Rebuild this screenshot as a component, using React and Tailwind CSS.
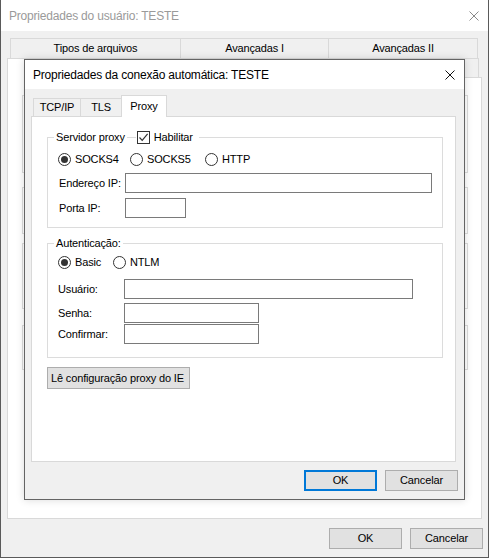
import React from "react";

const FONT = "font-['Liberation_Sans',Arial,sans-serif] text-[11px] tracking-[-0.15px]";

function CloseIcon({ color }) {
  return (
    <svg width="10" height="10" viewBox="0 0 10 10" className="block">
      <path d="M0.5 0.5L9.5 9.5M9.5 0.5L0.5 9.5" stroke={color} strokeWidth="1" fill="none" />
    </svg>
  );
}

function Radio({ checked, label, className = "" }) {
  return (
    <div className={`flex items-center h-[16px] ${className}`}>
      <span className="w-[13px] h-[13px] rounded-full border border-[#333] bg-white flex items-center justify-center shrink-0">
        {checked && <span className="w-[7px] h-[7px] rounded-full bg-[#333]" />}
      </span>
      <span className="ml-[4px] text-black">{label}</span>
    </div>
  );
}

function Checkbox({ checked }) {
  return (
    <span className="w-[13px] h-[13px] border border-[#333] bg-white flex items-center justify-center shrink-0">
      {checked && (
        <svg width="11" height="11" viewBox="0 0 11 11">
          <path d="M1.5 5.5L4.2 8.3L9.6 1.8" stroke="#333" strokeWidth="1.2" fill="none" />
        </svg>
      )}
    </span>
  );
}

function Field({ label, width, className = "" }) {
  return (
    <div className={`flex items-center ${className}`}>
      <span className="w-[66px] shrink-0 text-black">{label}</span>
      <div className={`h-[20px] border border-[#7a7a7a] bg-white ${width}`} />
    </div>
  );
}

function Button({ children, focused, className = "" }) {
  return (
    <button
      className={`h-[21px] w-[73px] bg-[#e1e1e1] text-black flex items-center justify-center ${
        focused ? "border-2 border-[#0078d7]" : "border border-[#adadad]"
      } ${className}`}
    >
      {children}
    </button>
  );
}

function ProxyTab() {
  return (
    <div className="pt-[13px] pl-[15px]">
      {/* servidor proxy */}
      <fieldset className="w-[396px] border border-[#dcdcdc] px-0 pb-[9px]">
        <legend className="ml-[6px] flex items-center h-[14px]">
          <span className="px-[2px]">Servidor proxy</span>
          <span className="w-[9px] h-px bg-[#dcdcdc]" />
          <span className="flex items-center pl-[1px] pr-[6px]">
            <Checkbox checked />
            <span className="ml-[4px]">Habilitar</span>
          </span>
        </legend>
        <div className="flex mt-[7px] pl-[10px]">
          <Radio checked label="SOCKS4" className="w-[72px]" />
          <Radio label="SOCKS5" className="w-[75px]" />
          <Radio label="HTTP" />
        </div>
        <Field label="Endereço IP:" width="w-[307px]" className="mt-[6px] pl-[11px]" />
        <Field label="Porta IP:" width="w-[61px]" className="mt-[5px] pl-[11px]" />
      </fieldset>

      {/* autenticação */}
      <fieldset className="w-[396px] mt-[8px] border border-[#dcdcdc] px-0 pb-[13px]">
        <legend className="ml-[6px] h-[14px] px-[2px] flex items-center">Autenticação:</legend>
        <div className="flex mt-[4px] pl-[10px]">
          <Radio checked label="Basic" className="w-[55px]" />
          <Radio label="NTLM" />
        </div>
        <Field label="Usuário:" width="w-[289px]" className="mt-[9px] pl-[10px]" />
        <Field label="Senha:" width="w-[135px]" className="mt-[4px] pl-[10px]" />
        <Field label="Confirmar:" width="w-[135px]" className="mt-px pl-[10px]" />
      </fieldset>

      <button className="mt-[9px] h-[22px] w-[143px] bg-[#e1e1e1] border border-[#adadad] text-left pl-[3px] text-black">
        Lê configuração proxy do IE
      </button>
    </div>
  );
}

function ConnectionDialog() {
  return (
    <div className="absolute z-20 left-[23px] top-[59px] w-[441px] h-[441px] border border-[#646464] bg-[#f0f0f0] shadow-[0_0_8px_rgba(0,0,0,0.15)] flex flex-col">
      <div className="h-[29px] bg-white flex items-center justify-between pl-[8px] pr-[9px]">
        <span className="text-[12px] text-black tracking-[-0.2px]">Propriedades da conexão automática: TESTE</span>
        <CloseIcon color="#111" />
      </div>

      <div className="pt-[6px] pl-[6px] pr-[8px]">
        <div className="flex items-end h-[21px] pl-[2px]">
          <div className="w-[47px] h-[18px] border-l border-t border-[#d9d9d9] flex items-center justify-center">TCP/IP</div>
          <div className="w-[41px] h-[18px] border-l border-t border-[#d9d9d9] flex items-center justify-center">TLS</div>
          <div className="relative z-10 -mb-px w-[46px] h-[22px] bg-white border-l border-t border-r border-[#d9d9d9] flex items-start justify-center pt-[2px]">
            Proxy
          </div>
        </div>
        <div className="h-[346px] bg-white border border-[#d9d9d9]">
          <ProxyTab />
        </div>
      </div>

      <div className="flex justify-end gap-[8px] mt-[8px] pr-[6px]">
        <Button focused>OK</Button>
        <Button>Cancelar</Button>
      </div>
    </div>
  );
}

export default function App() {
  return (
    <div className={`relative w-[489px] h-[558px] bg-[#f0f0f0] border-l border-r border-b border-[#5a5a5a] overflow-hidden ${FONT}`}>
      <div className="h-[31px] bg-white flex items-center justify-between pl-[8px] pr-[9px]">
        <span className="text-[12px] text-[#9a9a9a] tracking-[-0.2px]">Propriedades do usuário: TESTE</span>
        <CloseIcon color="#8a8a8a" />
      </div>

      <div className="pt-[7px] px-[6px]">
        {/* user properties tabs, two rows */}
        <div className="flex h-[20px] ml-[3px]">
          <div className="w-[170px] border-l border-t border-[#d9d9d9] flex items-center justify-center">Tipos de arquivos</div>
          <div className="w-[148px] border-l border-t border-[#d9d9d9] flex items-center justify-center">Avançadas I</div>
          <div className="w-[150px] border-l border-t border-r border-[#d9d9d9] flex items-center justify-center">Avançadas II</div>
        </div>
        <div className="flex h-[19px] items-end">
          <div className="relative z-10 -mb-px w-[82px] h-[20px] bg-white border-l border-t border-r border-[#d9d9d9]" />
          <div className="w-[130px] h-[19px] border-t border-r border-[#d9d9d9]" />
          <div className="w-[130px] h-[19px] border-t border-r border-[#d9d9d9]" />
          <div className="w-[130px] h-[19px] border-t border-r border-[#d9d9d9]" />
        </div>
        <div className="h-[442px] bg-white border border-[#d9d9d9] pt-[17px] pl-[14px]">
          <div className="w-[446px] h-[78px] border border-[#dcdcdc]" />
          <div className="w-[446px] h-[47px] mt-[14px] border border-[#dcdcdc]" />
          <div className="w-[446px] h-[66px] mt-[9px] border border-[#dcdcdc]" />
          <div className="w-[446px] h-[45px] mt-[16px] border border-[#dcdcdc]" />
        </div>
      </div>

      <div className="flex justify-end gap-[8px] mt-[9px] pr-[5px]">
        <Button>OK</Button>
        <Button>Cancelar</Button>
      </div>

      <ConnectionDialog />
    </div>
  );
}
